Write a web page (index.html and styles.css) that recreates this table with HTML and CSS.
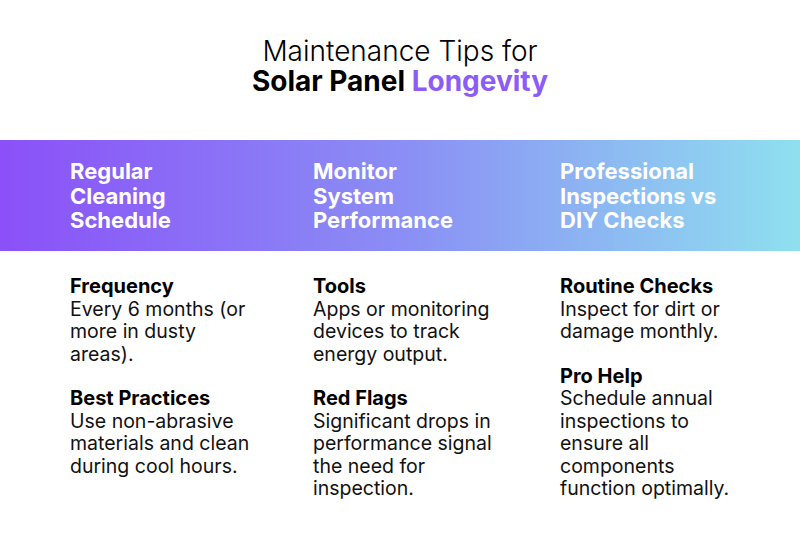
FILE: index.html
```html
<!DOCTYPE html>
<html lang="en">
<head>
<meta charset="utf-8">
<title>Maintenance Tips for Solar Panel Longevity</title>
<link rel="stylesheet" href="styles.css">
</head>
<body>
<main class="page">
  <h1 class="title">
    <span class="title-light">Maintenance Tips for</span>
    <span class="title-bold">Solar Panel <span class="accent">Longevity</span></span>
  </h1>
  <section class="band">
    <h2 class="col-head">Regular Cleaning Schedule</h2>
    <h2 class="col-head">Monitor System Performance</h2>
    <h2 class="col-head">Professional Inspections vs DIY Checks</h2>
  </section>
  <section class="cols">
    <div class="col">
      <div class="item">
        <h3 class="item-head">Frequency</h3>
        <p class="item-text">Every 6 months (or more in dusty areas).</p>
      </div>
      <div class="item">
        <h3 class="item-head">Best Practices</h3>
        <p class="item-text">Use non-abrasive materials and clean during cool hours.</p>
      </div>
    </div>
    <div class="col">
      <div class="item">
        <h3 class="item-head">Tools</h3>
        <p class="item-text">Apps or monitoring devices to track energy output.</p>
      </div>
      <div class="item">
        <h3 class="item-head">Red Flags</h3>
        <p class="item-text">Significant drops in performance signal the need for inspection.</p>
      </div>
    </div>
    <div class="col">
      <div class="item">
        <h3 class="item-head">Routine Checks</h3>
        <p class="item-text">Inspect for dirt or damage monthly.</p>
      </div>
      <div class="item">
        <h3 class="item-head">Pro Help</h3>
        <p class="item-text">Schedule annual inspections to ensure all components function optimally.</p>
      </div>
    </div>
  </section>
</main>
</body>
</html>
```
FILE: styles.css
```css
* { box-sizing: border-box; }
html, body { margin: 0; padding: 0; background: #fff; }
body {
  font-family: Inter, "Noto Sans", "Liberation Sans", sans-serif;
  color: #111;
  width: 800px;
  height: 533px;
  overflow: hidden;
}
.page { display: flex; flex-direction: column; }
.title {
  margin: 36px 0 0;
  display: flex;
  flex-direction: column;
  align-items: center;
  font-size: 28px;
  line-height: 30px;
  color: #000;
}
.title-light { font-weight: 300; }
.title-bold { font-weight: 700; }
.accent { color: #8b5cf6; }

.band {
  margin-top: 44px;
  height: 111px;
  padding: 19px 0 0 70px;
  display: grid;
  grid-template-columns: 243px 247px 1fr;
  align-items: start;
  background: linear-gradient(90deg, #8b50f8 0%, #8a8ef5 50%, #8fe0ef 100%);
}
.col-head {
  margin: 0;
  max-width: 162px;
  color: #fff;
  font-size: 22px;
  font-weight: 700;
  line-height: 24.5px;
}

.cols {
  padding: 24px 0 0 70px;
  display: grid;
  grid-template-columns: 243px 247px 1fr;
}
.col { display: flex; flex-direction: column; gap: 22px; max-width: 186px; }
.item-head {
  margin: 0;
  font-size: 20px;
  font-weight: 700;
  line-height: 22.5px;
  color: #000;
}
.item-text {
  margin: 0;
  font-size: 19.5px;
  font-weight: 400;
  line-height: 22.5px;
  color: #111;
}
```
